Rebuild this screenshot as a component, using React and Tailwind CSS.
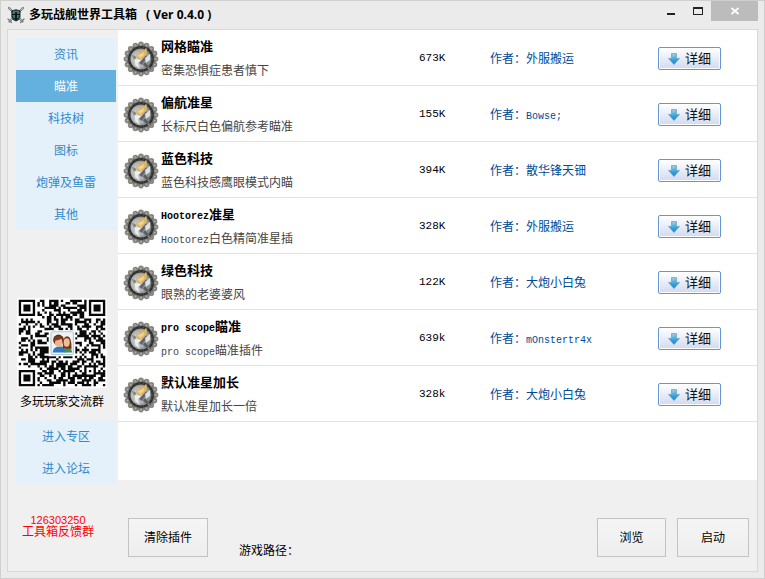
import React from "react";

const CATEGORIES = ["资讯", "瞄准", "科技树", "图标", "炮弹及鱼雷", "其他"];

const PLUGINS = [
  { latin: "", name: "网格瞄准", descLatin: "", desc: "密集恐惧症患者慎下", size: "673K", author: "外服搬运" },
  { latin: "", name: "偏航准星", descLatin: "", desc: "长标尺白色偏航参考瞄准", size: "155K", author: "Bowse;", latinAuthor: true },
  { latin: "", name: "蓝色科技", descLatin: "", desc: "蓝色科技感鹰眼模式内瞄", size: "394K", author: "散华锋天钿" },
  { latin: "Hootorez", name: "准星", descLatin: "Hootorez", desc: "白色精简准星插", size: "328K", author: "外服搬运" },
  { latin: "", name: "绿色科技", descLatin: "", desc: "眼熟的老婆婆风", size: "122K", author: "大炮小白兔" },
  { latin: "pro scope", name: "瞄准", descLatin: "pro scope", desc: "瞄准插件", size: "639k", author: "mOnstertr4x", latinAuthor: true },
  { latin: "", name: "默认准星加长", descLatin: "", desc: "默认准星加长一倍", size: "328k", author: "大炮小白兔" },
];

function Latin({ children }) {
  return children ? (
    <span className="font-['Liberation_Mono',monospace] text-[10px] leading-none">{children}</span>
  ) : null;
}

function AppLogo() {
  return (
    <svg className="h-[18px] w-[18px]" viewBox="0 0 18 18" aria-hidden="true">
      <g strokeLinecap="round">
        <path d="M2 2 L15.5 15.5 M16 2 L2.5 15.5" stroke="#777" strokeWidth="2.2" />
        <path d="M2 2 L15 15 M16 2 L3 15" stroke="#c4c4c4" strokeWidth="1" />
        <path d="M1 13 L4.500 16.500 M17 13 L13.500 16.500" stroke="#7c7c7c" strokeWidth="1.3" />
      </g>
      <path d="M4.300 4.500 L9 3.300 L13.500 4.500 V11 Q12.500 14 9 15.500 Q5.500 14 4.300 11 Z" fill="#1d2b2b" />
      <path d="M5.500 6 H8 V12.500 Q6 11.500 5.500 10 Z M10 6 H12.300 V10 Q12 11.500 10 12.500 Z" fill="#3d7770" />
      <path d="M5 8.500 H13 M9 4.500 V14" stroke="#0c1516" strokeWidth="1.200" />
      <path d="M6 5.300 H12" stroke="#7ba39c" strokeWidth="0.800" />
    </svg>
  );
}

const BEADS = Array.from({ length: 16 }, (_, i) => {
  const a = (i / 16) * Math.PI * 2;
  return { x: 18 + Math.sin(a) * 14.6, y: 18 - Math.cos(a) * 14.6 };
});

function Medal() {
  return (
    <svg className="h-9 w-9" viewBox="0 0 36 36" aria-hidden="true">
      <defs>
        <radialGradient id="globe" cx="0.4" cy="0.5" r="0.65">
          <stop offset="0" stopColor="#e6e8e8" />
          <stop offset="0.6" stopColor="#adb1b2" />
          <stop offset="1" stopColor="#676b6d" />
        </radialGradient>
      </defs>
      {BEADS.map((b, i) => (
        <circle key={i} cx={b.x} cy={b.y} r="2.800" fill="#84847f" />
      ))}
      <circle cx="18" cy="18" r="14.800" fill="#74746f" />
      {BEADS.map((b, i) => (
        <circle key={i} cx={b.x} cy={b.y} r="1.200" fill="#a5a59f" />
      ))}
      <circle cx="18" cy="18" r="12.900" fill="#30302f" />
      <circle cx="18" cy="18" r="11.800" fill="none" stroke="#5d5d58" strokeWidth="0.800" strokeDasharray="1.200 2.600" />
      <circle cx="18" cy="18" r="10.600" fill="url(#globe)" />
      <path d="M8.500 18 L12 19 L12 24 L17 28 L14.500 22 L18 19 Z" fill="#f4f5f5" opacity="0.850" />
      <path d="M8.500 13.500 L14 16 L11 19 Z M19 23 L25 18 L27 21 L22 27 Z" fill="#84898c" />
      <path d="M16 22 L23 14 L25 16 L18.500 24 Z" fill="#62666a" />
      <path d="M22 17 L27 13 L27 19 L23 22 Z" fill="#dfe2e3" />
      <path d="M13 14 L16 11 L18 12 L19 8.500 L21 10 L23 6.500 L24 9.500 L23 14 L20 17 L17 19 L14 17.500 Z" fill="#dfb664" />
      <path d="M14.500 14 L18 13 L21 11 L20.500 14.500 L17 17 Z" fill="#f0d596" />
      <path d="M21 22.500 L28 29" stroke="#5a5f62" strokeWidth="2.600" />
      <path d="M25 27 L29 30.500" stroke="#8f9294" strokeWidth="1.300" />
    </svg>
  );
}

function DownArrow() {
  return (
    <svg className="h-3 w-3" viewBox="0 0 12 12" aria-hidden="true">
      <defs>
        <linearGradient id="arrow" x1="0" y1="0" x2="0" y2="1">
          <stop offset="0" stopColor="#a3cfe0" />
          <stop offset="0.5" stopColor="#45aade" />
          <stop offset="1" stopColor="#0a7fd0" />
        </linearGradient>
      </defs>
      <path d="M3.500 0.500 H8.500 V5.500 H11.500 L6 11.500 L0.500 5.500 H3.500 Z" fill="url(#arrow)" stroke="#5d9fc4" strokeWidth="0.700" />
    </svg>
  );
}

const QR_SIZE = 37;

function finderCell(x, y) {
  const corners = [[0, 0], [QR_SIZE - 7, 0], [0, QR_SIZE - 7]];
  for (const [cx, cy] of corners) {
    const dx = x - cx;
    const dy = y - cy;
    if (dx >= -1 && dx <= 7 && dy >= -1 && dy <= 7) {
      const d = Math.max(Math.abs(dx - 3), Math.abs(dy - 3));
      return d === 3 || d <= 1;
    }
  }
  const d = Math.max(Math.abs(x - 30), Math.abs(y - 30));
  if (d <= 2) return d !== 1;
  return null;
}

function buildQrPath() {
  let seed = 20473;
  let path = "";
  for (let y = 0; y < QR_SIZE; y++) {
    for (let x = 0; x < QR_SIZE; x++) {
      seed = (seed * 48271) % 2147483647;
      const fixed = finderCell(x, y);
      const dark = fixed === null ? (seed >> 12) % 100 < 54 : fixed;
      if (dark) path += `M${x} ${y}h1v1h-1z`;
    }
  }
  return path;
}

const QR_PATH = buildQrPath();

function QrCode() {
  return (
    <svg className="h-[90px] w-[90px]" viewBox="-0.750 -0.750 38.500 38.500" role="img" aria-label="多玩玩家交流群">
      <rect x="-0.750" y="-0.750" width="38.500" height="38.500" fill="#fff" />
      <path d={QR_PATH} fill="#080808" />
      <rect x="12.800" y="13" width="11.400" height="11.200" fill="#fff" />
      <rect x="13.800" y="13.700" width="9.600" height="9.800" rx="0.800" fill="#edf3f6" stroke="#b9c9d4" strokeWidth="0.500" />
      <path d="M14.500 22.600 Q14.700 20.300 17 20 H18.500 Q20 20.500 20 22.600 Z" fill="#2d78be" />
      <path d="M19.500 22.600 Q19.500 20.500 21 20 Q22.600 20.500 22.800 22.600 Z" fill="#40915c" />
      <path d="M18.900 20.800 Q18.500 15.600 20.700 15.600 Q22.700 15.600 22.600 21 L21.500 21 Z" fill="#74351f" />
      <ellipse cx="20.500" cy="18.300" rx="1.300" ry="1.800" fill="#f0bc93" />
      <ellipse cx="17" cy="17.200" rx="2.300" ry="2.300" fill="#6b2d18" />
      <ellipse cx="17.100" cy="18.300" rx="1.600" ry="1.900" fill="#eeb48a" />
      <path d="M15 17.500 Q17 17.600 18.600 16.500 L18.300 15.600 H15.800 Z" fill="#7b3a20" />
    </svg>
  );
}

function SideItem({ label, active }) {
  return (
    <button
      type="button"
      className={
        active
          ? "h-8 w-full bg-[#64b0df] pt-0.5 text-center text-white"
          : "h-8 w-full bg-[#e4f1fa] pt-0.5 text-center text-[#318bca]"
      }
    >
      {label}
    </button>
  );
}

function PlainButton({ className, children }) {
  return (
    <button
      type="button"
      className={`h-[39px] border border-[#c3c3c3] bg-linear-to-b from-[#f5f5f5] to-[#eeeeee] text-black ${className}`}
    >
      {children}
    </button>
  );
}

function PluginRow({ plugin }) {
  return (
    <li className="grid h-14 grid-cols-[36px_1fr_71px_168px_63px] items-center border-b border-[#e3e3e3] pt-0.5 pr-9 pl-[5px]">
      <Medal />
      <div className="pl-0.5 leading-6">
        <h2 className="text-[13px] font-bold text-black">
          <Latin>{plugin.latin}</Latin>
          {plugin.name}
        </h2>
        <p className="text-[#454545]">
          <Latin>{plugin.descLatin}</Latin>
          {plugin.desc}
        </p>
      </div>
      <span className="font-['Liberation_Mono',monospace] text-[11px] text-black">{plugin.size}</span>
      <span className="leading-6 text-[#004b97]">
        作者：{plugin.latinAuthor ? <Latin>{plugin.author}</Latin> : plugin.author}
      </span>
      <button
        type="button"
        className="flex h-[23px] items-center gap-[5px] rounded-xs border border-[#6396d2] bg-linear-to-b from-white to-[#d3daf0] pl-[9px] text-[13px] text-[#111] shadow-[inset_0_0_0_1px_#ffffff]"
      >
        <DownArrow />
        详细
      </button>
    </li>
  );
}

export default function App() {
  return (
    <div className="flex min-h-screen flex-col border border-[#cfcfcf] bg-[#ebebeb] px-1.5 pb-1.5 font-['Liberation_Sans','Noto_Sans_CJK_SC',sans-serif] text-xs">
      <header className="flex h-7 items-start">
        <div className="flex h-7 flex-1 items-center gap-1">
          <AppLogo />
          <h1 className="flex gap-[9px] font-bold text-black">
            <span>多玩战舰世界工具箱</span>
            <span className="font-['Open_Sans',sans-serif]">( Ver 0.4.0 )</span>
          </h1>
        </div>
        <button type="button" aria-label="最小化" className="flex h-5 w-7 items-center justify-center">
          <svg className="h-2.5 w-2.5" viewBox="0 0 10 10" shapeRendering="crispEdges" aria-hidden="true">
            <rect x="1" y="7" width="8" height="2" fill="#222" />
          </svg>
        </button>
        <button type="button" aria-label="最大化" className="flex h-5 w-[26px] items-center justify-center">
          <svg className="h-2.5 w-2.5" viewBox="0 0 10 10" shapeRendering="crispEdges" aria-hidden="true">
            <path d="M0 1 H10 V9 H0 Z M1 3 V8 H9 V3 Z" fill="#222" fillRule="evenodd" />
          </svg>
        </button>
        <button type="button" aria-label="关闭" className="flex h-5 w-[47px] items-center justify-center bg-[#bcbcbc]">
          <svg className="h-2 w-2" viewBox="0 0 8 8" aria-hidden="true">
            <path d="M0.500 1 L7.500 7 M7.500 1 L0.500 7" stroke="#fff" strokeWidth="1.700" />
          </svg>
        </button>
      </header>

      <div className="flex flex-1 border border-[#d8d8d8] bg-[#f0f0f0]">
        <aside className="flex w-[110px] shrink-0 flex-col pt-2 pr-0.5 pl-2">
          <nav className="flex flex-col">
            {CATEGORIES.map((label) => (
              <SideItem key={label} label={label} active={label === "瞄准"} />
            ))}
          </nav>
          <figure className="mt-17 mr-2 flex flex-col items-center">
            <QrCode />
            <figcaption className="mt-1 leading-5 text-black">多玩玩家交流群</figcaption>
          </figure>
          <nav className="mt-2 flex flex-col">
            <SideItem label="进入专区" />
            <SideItem label="进入论坛" />
          </nav>
          <p className="mt-7.5 mr-4 text-center leading-3 text-[#ff0000]">
            <span className="block text-[11px]">126303250</span>
            工具箱反馈群
          </p>
        </aside>

        <main className="flex min-w-0 flex-1 flex-col">
          <ul className="flex-1 bg-white">
            {PLUGINS.map((plugin) => (
              <PluginRow key={plugin.name + plugin.desc} plugin={plugin} />
            ))}
          </ul>
          <footer className="flex items-end pt-[38px] pr-2 pb-3.5 pl-2.5">
            <PlainButton className="w-20">清除插件</PlainButton>
            <span className="ml-[31px] flex-1 leading-3 text-black">游戏路径：</span>
            <PlainButton className="w-[69px]">浏览</PlainButton>
            <PlainButton className="ml-[11px] w-[72px]">启动</PlainButton>
          </footer>
        </main>
      </div>
    </div>
  );
}
